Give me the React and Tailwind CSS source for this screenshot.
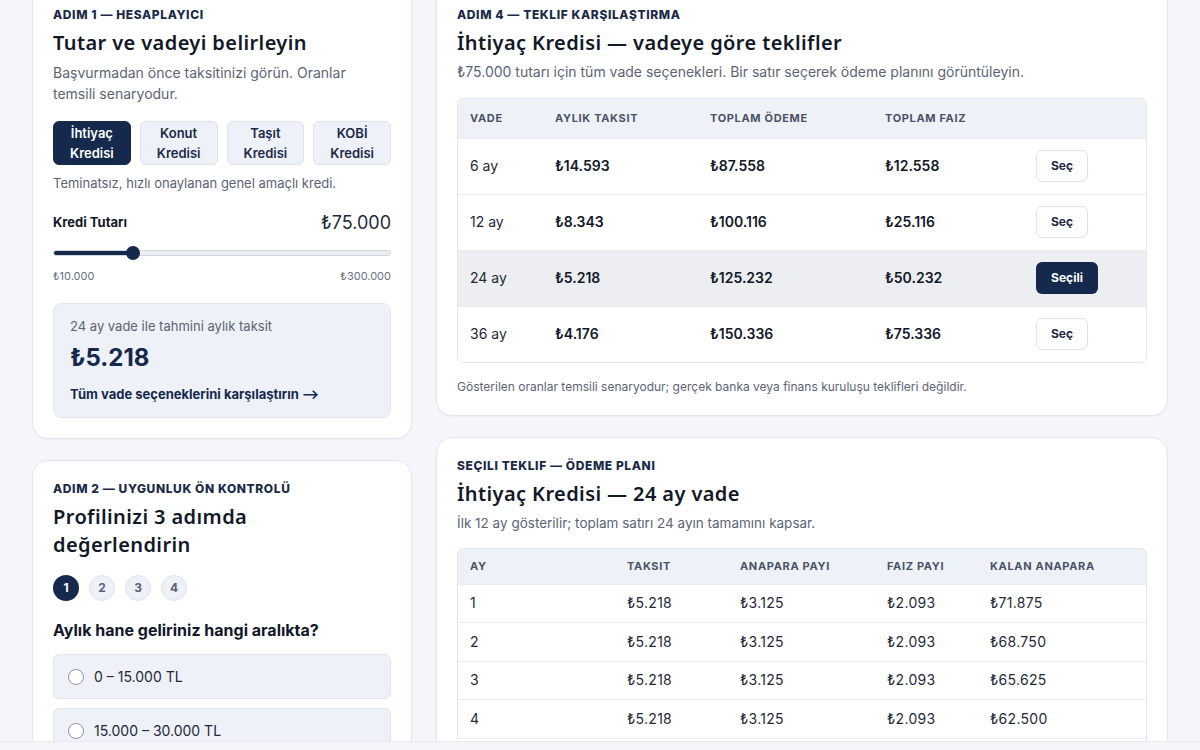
import { useState } from "react";

const offers = [
  { term: "6 ay", monthly: "₺14.593", total: "₺87.558", interest: "₺12.558" },
  { term: "12 ay", monthly: "₺8.343", total: "₺100.116", interest: "₺25.116" },
  { term: "24 ay", monthly: "₺5.218", total: "₺125.232", interest: "₺50.232" },
  { term: "36 ay", monthly: "₺4.176", total: "₺150.336", interest: "₺75.336" },
];

const plan = [
  { month: 1, rest: "₺71.875" },
  { month: 2, rest: "₺68.750" },
  { month: 3, rest: "₺65.625" },
  { month: 4, rest: "₺62.500" },
  { month: 5, rest: "₺59.375" },
];

const loanTypes = [
  ["İhtiyaç", "Kredisi"],
  ["Konut", "Kredisi"],
  ["Taşıt", "Kredisi"],
  ["KOBİ", "Kredisi"],
];

const HEADING = "font-['Noto_Sans',sans-serif] text-[20px] leading-7 font-semibold tracking-[0.02em] text-[#111827]";
const LABEL = "text-[12px] leading-4 font-extrabold uppercase tracking-[0.05em] text-[#1b2a48]";

function Card({ children }) {
  return (
    <section className="rounded-2xl border border-[#e2e6ee] bg-white p-5 shadow-[0_1px_2px_rgba(15,23,42,0.04)]">
      {children}
    </section>
  );
}

export default function App() {
  const [selected, setSelected] = useState(2);
  const [type, setType] = useState(0);

  return (
    <div className="h-[750px] overflow-hidden bg-[#f4f6fa] font-['Inter',sans-serif] text-[#111827]">
      <div className="-mt-[14px] grid grid-cols-[380px_1fr] gap-6 px-8">
        <div className="flex flex-col gap-[21px]">
          <Card>
            <p className={LABEL}>Adım 1 — Hesaplayıcı</p>
            <h2 className={`mt-1.5 ${HEADING}`}>Tutar ve vadeyi belirleyin</h2>
            <p className="mt-[5px] text-sm leading-[21px] text-[#5b6475]">
              Başvurmadan önce taksitinizi görün. Oranlar temsili senaryodur.
            </p>

            <div className="mt-[17px] grid grid-cols-4 gap-[9px]">
              {loanTypes.map((t, i) => (
                <button
                  key={t[0]}
                  onClick={() => setType(i)}
                  className={
                    i === type
                      ? "rounded-md border border-[#14294b] bg-[#14294b] py-[1px] text-[13px] leading-5 font-semibold text-white"
                      : "rounded-md border border-[#dde2ec] bg-[#eef1f8] py-[1px] text-[13px] leading-5 font-semibold text-[#1b2a48]"
                  }
                >
                  {t[0]}
                  <br />
                  {t[1]}
                </button>
              ))}
            </div>
            <p className="mt-[9px] text-[13px] leading-[18px] text-[#5b6475]">
              Teminatsız, hızlı onaylanan genel amaçlı kredi.
            </p>

            <div className="mt-5 flex items-center justify-between">
              <span className="text-[13px] font-bold text-[#111827]">Kredi Tutarı</span>
              <span className="text-[18px] leading-[22px] text-[#1f2937]">₺75.000</span>
            </div>
            <div className="relative mt-[16px] h-[6px] rounded-full border border-[#cfd5df] bg-[#eceef2]">
              <div className="h-full w-[23.5%] rounded-full bg-[#14294b]" />
              <div className="absolute left-[23.5%] top-1/2 h-[14px] w-[14px] -translate-x-1/2 -translate-y-1/2 rounded-full bg-[#14294b]" />
            </div>
            <div className="mt-[12px] flex justify-between text-[11px] leading-4 text-[#6b7280]">
              <span>₺10.000</span>
              <span>₺300.000</span>
            </div>

            <div className="mt-[19px] rounded-lg border border-[#e2e6ee] bg-[#eef1f8] px-4 pt-[12px] pb-[13px]">
              <p className="text-[13px] leading-5 text-[#5b6475]">24 ay vade ile tahmini aylık taksit</p>
              <p className="mt-[6px] text-[24px] leading-8 font-bold text-[#14294b]">₺5.218</p>
              <p className="mt-[10px] text-[13px] leading-5 font-bold text-[#14294b]">
                Tüm vade seçeneklerini karşılaştırın ⟶
              </p>
            </div>
          </Card>

          <Card>
            <p className={LABEL}>Adım 2 — Uygunluk Ön Kontrolü</p>
            <h2 className={`mt-1.5 max-w-[300px] ${HEADING}`}>Profilinizi 3 adımda değerlendirin</h2>
            <div className="mt-[16px] flex gap-[10px]">
              {[1, 2, 3, 4].map((n) => (
                <span
                  key={n}
                  className={
                    n === 1
                      ? "flex h-[26px] w-[26px] items-center justify-center rounded-full bg-[#14294b] text-xs font-bold text-white"
                      : "flex h-[26px] w-[26px] items-center justify-center rounded-full border border-[#dde2ec] bg-[#eef1f8] text-xs font-bold text-[#5b6475]"
                  }
                >
                  {n}
                </span>
              ))}
            </div>
            <p className="mt-[17px] text-base leading-6 font-bold text-[#111827]">
              Aylık hane geliriniz hangi aralıkta?
            </p>
            <div className="mt-[12px] flex flex-col gap-[9px]">
              {["0 – 15.000 TL", "15.000 – 30.000 TL", "30.000 – 60.000 TL"].map((o) => (
                <label
                  key={o}
                  className="flex h-[45px] items-center gap-[10px] rounded-md border border-[#e2e6ee] bg-[#eef1f8] px-[14px] text-sm text-[#1f2937]"
                >
                  <span className="h-4 w-4 rounded-full border border-[#8c95a5] bg-white" />
                  {o}
                </label>
              ))}
            </div>
          </Card>
        </div>

        <div className="flex flex-col gap-[21px]">
          <Card>
            <p className={LABEL}>Adım 4 — Teklif Karşılaştırma</p>
            <h2 className={`mt-1.5 ${HEADING}`}>İhtiyaç Kredisi — vadeye göre teklifler</h2>
            <p className="mt-[5px] text-sm leading-5 text-[#5b6475]">
              ₺75.000 tutarı için tüm vade seçenekleri. Bir satır seçerek ödeme planını görüntüleyin.
            </p>
            <div className="mt-4 overflow-hidden rounded-md border border-[#e2e6ee]">
              <table className="w-full table-fixed text-left">
                <colgroup>
                  <col className="w-[85px]" />
                  <col className="w-[155px]" />
                  <col className="w-[175px]" />
                  <col className="w-[151px]" />
                  <col />
                </colgroup>
                <thead className="bg-[#eef1f8]">
                  <tr className="h-[39px] text-[11px] font-bold uppercase tracking-[0.06em] text-[#4a5366]">
                    <th className="px-3 font-bold">Vade</th>
                    <th className="px-3 font-bold">Aylık Taksit</th>
                    <th className="px-3 font-bold">Toplam Ödeme</th>
                    <th className="px-3 font-bold">Toplam Faiz</th>
                    <th />
                  </tr>
                </thead>
                <tbody>
                  {offers.map((o, i) => (
                    <tr
                      key={o.term}
                      className={`h-[56px] border-t border-[#e8ebf0] text-sm ${i === selected ? "bg-[#eceef2]" : "bg-white"}`}
                    >
                      <td className="px-3 text-[#1f2937]">{o.term}</td>
                      <td className="px-3 font-semibold text-[#111827]">{o.monthly}</td>
                      <td className="px-3 font-semibold text-[#111827]">{o.total}</td>
                      <td className="px-3 font-semibold text-[#111827]">{o.interest}</td>
                      <td className="px-3">
                        <button
                          onClick={() => setSelected(i)}
                          className={
                            i === selected
                              ? "h-8 w-[62px] rounded-md bg-[#14294b] text-xs font-bold text-white"
                              : "h-8 w-[52px] rounded-md border border-[#dde2ec] bg-white text-xs font-bold text-[#1b2a48]"
                          }
                        >
                          {i === selected ? "Seçili" : "Seç"}
                        </button>
                      </td>
                    </tr>
                  ))}
                </tbody>
              </table>
            </div>
            <p className="mt-4 text-xs leading-4 text-[#5b6475]">
              Gösterilen oranlar temsili senaryodur; gerçek banka veya finans kuruluşu teklifleri değildir.
            </p>
          </Card>

          <Card>
            <p className={LABEL}>Seçili Teklif — Ödeme Planı</p>
            <h2 className={`mt-1.5 ${HEADING}`}>İhtiyaç Kredisi — 24 ay vade</h2>
            <p className="mt-[5px] text-[13.5px] leading-5 text-[#5b6475]">
              İlk 12 ay gösterilir; toplam satırı 24 ayın tamamını kapsar.
            </p>
            <div className="mt-[15px] overflow-hidden rounded-md border border-[#e2e6ee]">
              <table className="w-full table-fixed text-left">
                <colgroup>
                  <col className="w-[157px]" />
                  <col className="w-[113px]" />
                  <col className="w-[147px]" />
                  <col className="w-[103px]" />
                  <col />
                </colgroup>
                <thead className="bg-[#eef1f8]">
                  <tr className="h-[35px] text-[11px] font-bold uppercase tracking-[0.06em] text-[#4a5366]">
                    <th className="px-3 font-bold">Ay</th>
                    <th className="px-3 font-bold">Taksit</th>
                    <th className="px-3 font-bold">Anapara Payı</th>
                    <th className="px-3 font-bold">Faiz Payı</th>
                    <th className="px-3 font-bold">Kalan Anapara</th>
                  </tr>
                </thead>
                <tbody>
                  {plan.map((r) => (
                    <tr key={r.month} className="h-[38.5px] border-t border-[#e8ebf0] text-sm tracking-[0.02em] text-[#1f2937]">
                      <td className="px-3">{r.month}</td>
                      <td className="px-3">₺5.218</td>
                      <td className="px-3">₺3.125</td>
                      <td className="px-3">₺2.093</td>
                      <td className="px-3">{r.rest}</td>
                    </tr>
                  ))}
                </tbody>
              </table>
            </div>
          </Card>
        </div>
      </div>
      <div className="fixed inset-x-0 bottom-0 h-[9px] border-t border-[#e8ebf0] bg-[#f4f5f8]" />
    </div>
  );
}
